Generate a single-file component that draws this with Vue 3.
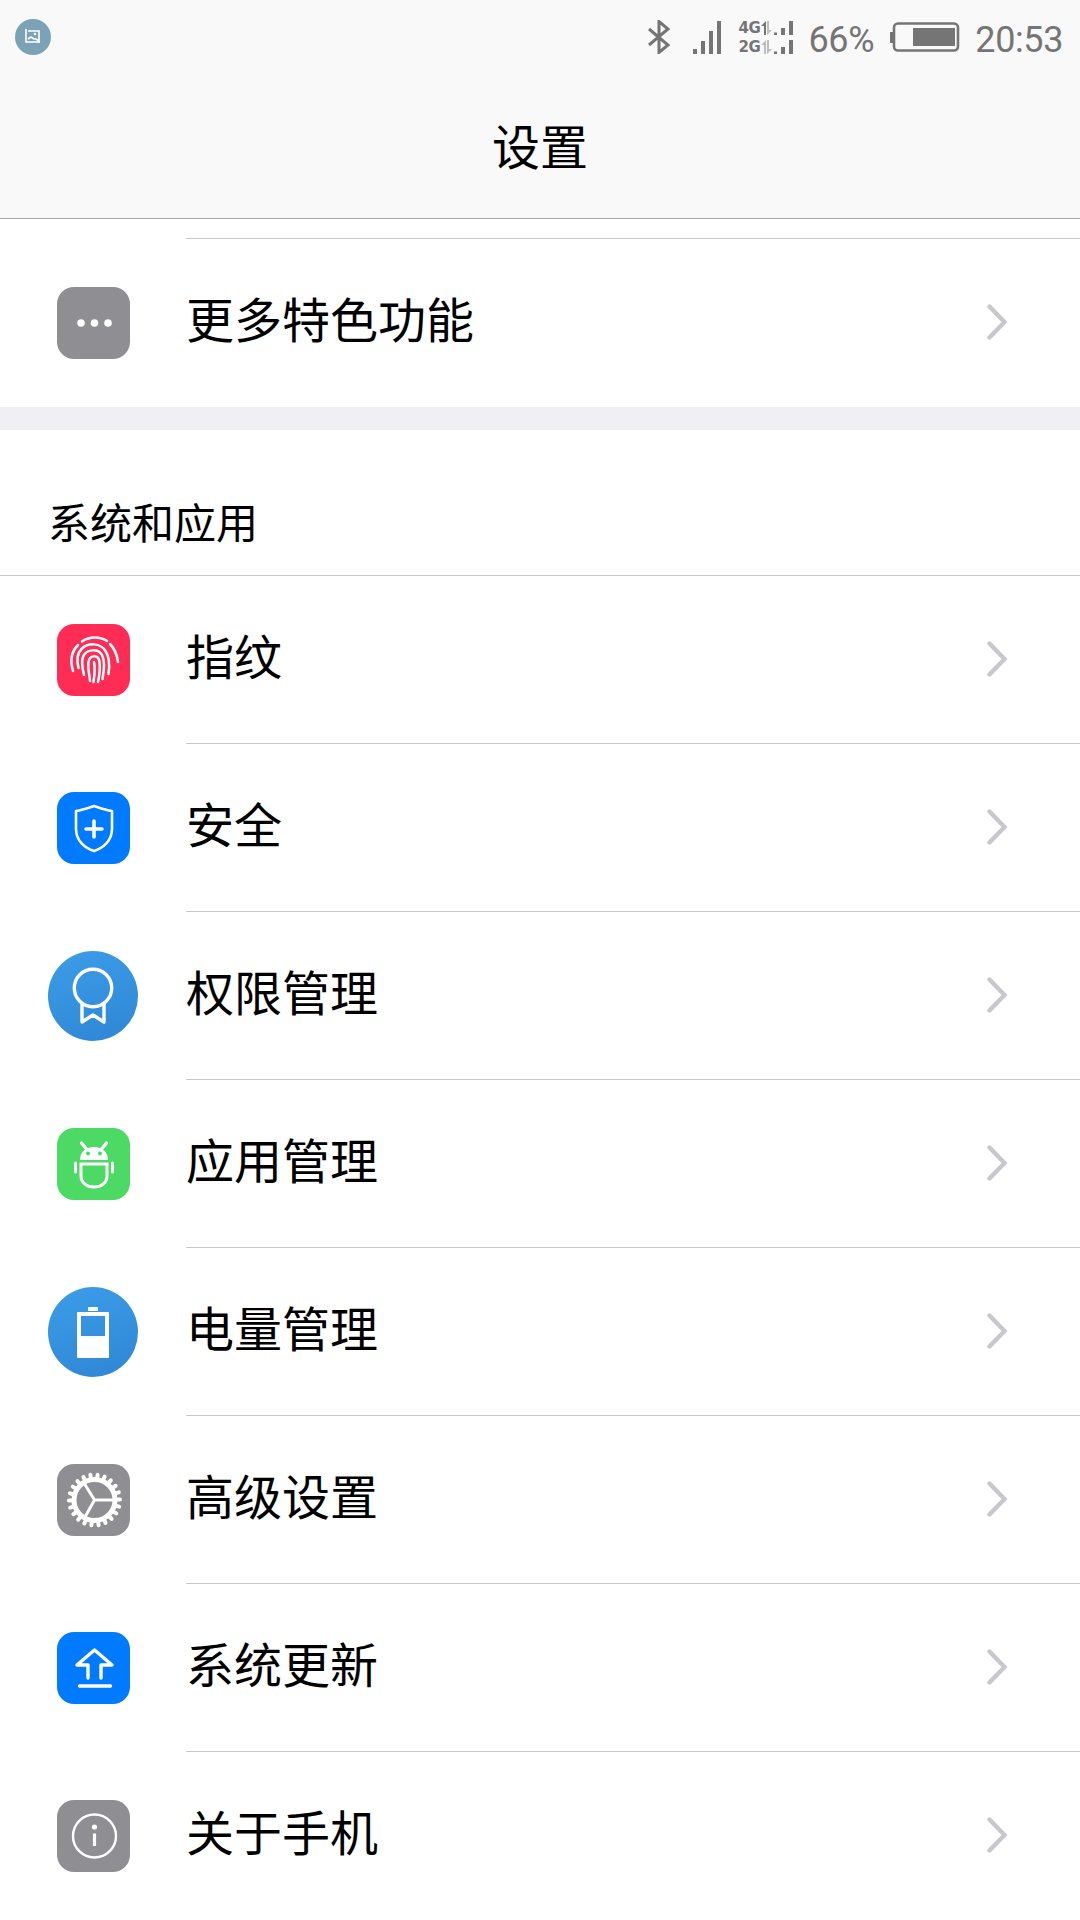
<script setup>
const rows = [
  { name: '指纹', icon: 'finger' },
  { name: '安全', icon: 'shield' },
  { name: '权限管理', icon: 'medal' },
  { name: '应用管理', icon: 'android' },
  { name: '电量管理', icon: 'battery' },
  { name: '高级设置', icon: 'gear' },
  { name: '系统更新', icon: 'update' },
  { name: '关于手机', icon: 'info' },
]
const teeth = Array.from({ length: 22 }, (_, i) => (i * 360) / 22)
</script>

<template>
  <div class="page">
    <header class="head">
      <div class="status">
        <div class="notif">
          <svg width="18" height="18" viewBox="0 0 18 18" fill="none" stroke="#fff" stroke-width="1.6">
            <path d="M2 1v13h14M4 3h11v12" />
            <path d="M4 11l3-2 3 2 2 0 3 2" />
            <circle cx="11" cy="6" r="1.3" fill="#fff" stroke="none" />
          </svg>
        </div>
        <div class="status-right">
          <svg class="bt" width="22" height="34" viewBox="0 0 22 34" fill="none" stroke="#757575" stroke-width="3">
            <path d="M1 9l19 16-9 7.500V1.500l9 7.500L1 25" />
          </svg>
          <svg class="sig" width="28" height="33" viewBox="0 0 28 33" fill="#757575">
            <rect x="0" y="28" width="4" height="5" />
            <rect x="8" y="20" width="4" height="13" />
            <rect x="16" y="10" width="4" height="23" />
            <rect x="24" y="0" width="4" height="33" />
          </svg>
          <div class="dual">
            <div class="sim">
              <span class="net">4G</span>
              <svg width="32" height="14" viewBox="0 0 32 14" fill="#757575">
                <path d="M0 5L5 0v14H3V5z" />
                <path d="M6 0h2v9h3l-5 5z" fill="#bdbdbd" />
                <rect x="13" y="11.500" width="3" height="2.500" />
                <rect x="20" y="7" width="4" height="7" />
                <rect x="28" y="0" width="4" height="14" />
              </svg>
            </div>
            <div class="sim">
              <span class="net">2G</span>
              <svg width="32" height="14" viewBox="0 0 32 14" fill="#757575">
                <path d="M0 5L5 0v14H3V5z" fill="#bdbdbd" />
                <path d="M6 0h2v9h3l-5 5z" fill="#bdbdbd" />
                <rect x="13" y="11.500" width="3" height="2.500" />
                <rect x="20" y="7" width="4" height="7" />
                <rect x="28" y="0" width="4" height="14" />
              </svg>
            </div>
          </div>
          <span class="pct">66%</span>
          <svg class="batt" width="70" height="30" viewBox="0 0 70 30">
            <rect x="0" y="10" width="3" height="11" fill="#757575" />
            <rect x="4" y="1.500" width="64" height="27" rx="4" fill="none" stroke="#757575" stroke-width="2.600" />
            <rect x="23" y="6" width="42" height="18" fill="#757575" />
          </svg>
          <span class="time">20:53</span>
        </div>
      </div>
      <div class="title">设置</div>
    </header>

    <div class="top-gap"></div>
    <div class="row tall">
      <div class="icon-box">
        <div class="icon square gray">
          <svg width="72" height="72" viewBox="0 0 72 72" fill="#fff">
            <circle cx="23" cy="36" r="3.800" /><circle cx="36.500" cy="36" r="3.800" /><circle cx="50" cy="36" r="3.800" />
          </svg>
        </div>
      </div>
      <div class="row-body">
        <span class="label">更多特色功能</span>
        <svg class="chev" width="20" height="36" viewBox="0 0 20 36" fill="none" stroke="#c7c7cc" stroke-width="4.400" stroke-linecap="round">
          <path d="M2.500 2.500L17.500 18 2.500 33.500" />
        </svg>
      </div>
    </div>

    <div class="band"></div>
    <div class="section">系统和应用</div>

    <div v-for="r in rows" :key="r.name" class="row">
      <div class="icon-box">
        <div v-if="r.icon === 'finger'" class="icon square red">
          <svg width="72" height="72" viewBox="0 0 72 72" fill="none" stroke="#fff" stroke-width="2.500" stroke-linecap="round">
            <path d="M15 47c-3-10-2-19 5-26" />
            <path d="M24 17.500c8-5.500 18-5 25-.5" />
            <path d="M52 20c4 4 7 10 8 18" />
            <path d="M20.500 44c-2-8-2-14 3-19 7-7 19-6 24 2 4 6 4.500 13 3 23" />
            <path d="M26 51c-2-8-3-13-1-18 3-8 15-9 19-2 3 6 2.500 14 .5 24" />
            <path d="M32 57c-.5-7-2.500-13-1.500-19 1-7 10-8 11 0 1 7 0 13-1.500 20" />
            <path d="M36 38c1.500 7 .5 13-.5 20" />
          </svg>
        </div>
        <div v-else-if="r.icon === 'shield'" class="icon square blue">
          <svg width="72" height="72" viewBox="0 0 72 72" fill="none" stroke="#fff" stroke-linecap="round" stroke-linejoin="round">
            <path stroke-width="2.600" d="M18 19c7-1 12-3 18-5 6 2 11 4 18 5v18c0 12-9 19-18 22-9-3-18-10-18-22z" />
            <path stroke-width="3.600" d="M28 37h16M36 29v16" />
          </svg>
        </div>
        <div v-else-if="r.icon === 'medal'" class="icon round">
          <svg width="90" height="90" viewBox="0 0 90 90" fill="none" stroke="#fff" stroke-width="3.400" stroke-linecap="round" stroke-linejoin="round">
            <circle cx="45" cy="37" r="18.700" />
            <path d="M34 53v18l11-7 11 7V53" />
          </svg>
        </div>
        <div v-else-if="r.icon === 'android'" class="icon square green">
          <svg width="72" height="72" viewBox="0 0 72 72" fill="none" stroke="#fff" stroke-linecap="round">
            <path fill="#fff" stroke="none" d="M22 32c0-8 6-13 14-13s14 5 14 13z" />
            <path stroke-width="3.200" d="M23.500 15l5 6M48.500 15l-5 6" />
            <circle cx="30" cy="25.500" r="2" fill="#4cd964" stroke="none" />
            <circle cx="42" cy="25.500" r="2" fill="#4cd964" stroke="none" />
            <path stroke-width="3" d="M23 36h26v12c0 7-6 11-13 11s-13-4-13-11z" />
            <path stroke-width="3" d="M17.500 35v9M54.500 35v9" />
          </svg>
        </div>
        <div v-else-if="r.icon === 'battery'" class="icon round">
          <svg width="90" height="90" viewBox="0 0 90 90" fill="#fff">
            <rect x="40" y="20" width="10" height="4" rx="0.500" />
            <path fill-rule="evenodd" d="M30 25h30a1 1 0 0 1 1 1v44a1 1 0 0 1-1 1H30a1 1 0 0 1-1-1V26a1 1 0 0 1 1-1zM33 29v20h24V29z" />
          </svg>
        </div>
        <div v-else-if="r.icon === 'gear'" class="icon square gray">
          <svg width="72" height="72" viewBox="0 0 72 72" fill="none" stroke="#fff">
            <g stroke-width="4" stroke-linecap="round">
              <line v-for="t in teeth" :key="t" x1="36.500" y1="14" x2="36.500" y2="10.500" :transform="`rotate(${t + 7} 36.500 36)`" />
            </g>
            <circle cx="36.500" cy="36" r="20.500" stroke-width="5" />
            <path stroke-width="3" d="M36.500 36L26 19M36.500 36h20M36.500 36L27 53" />
          </svg>
        </div>
        <div v-else-if="r.icon === 'update'" class="icon square blue">
          <svg width="72" height="72" viewBox="0 0 72 72" fill="none" stroke="#fff" stroke-width="3.400" stroke-linecap="round" stroke-linejoin="round">
            <path d="M30 46V33H19L36.500 18 54 33H43v13" />
            <path d="M21.500 54h31" />
          </svg>
        </div>
        <div v-else class="icon square gray">
          <svg width="72" height="72" viewBox="0 0 72 72" fill="none" stroke="#fff">
            <circle cx="36.500" cy="36" r="21.500" stroke-width="2.400" />
            <circle cx="36.500" cy="27" r="2.600" fill="#fff" stroke="none" />
            <path stroke-width="3.200" d="M36.500 33.500V46" />
          </svg>
        </div>
      </div>
      <div class="row-body">
        <span class="label">{{ r.name }}</span>
        <svg class="chev" width="20" height="36" viewBox="0 0 20 36" fill="none" stroke="#c7c7cc" stroke-width="4.400" stroke-linecap="round">
          <path d="M2.500 2.500L17.500 18 2.500 33.500" />
        </svg>
      </div>
    </div>
  </div>
</template>

<style>
html, body { margin: 0; background: #fff; overflow: hidden; }
</style>

<style scoped>
.page {
  width: 1080px;
  height: 1920px;
  overflow: hidden;
  background: #fff;
  font-family: "Noto Sans CJK SC", "Roboto", sans-serif;
  color: #000;
}
.head {
  height: 218px;
  background: #f9f9f9;
  border-bottom: 1px solid #a8a8a8;
}
.status {
  height: 74px;
  display: flex;
  align-items: center;
  justify-content: space-between;
  padding: 0 17px 0 15px;
}
.notif {
  width: 36px;
  height: 36px;
  border-radius: 50%;
  background: #7ba3b5;
  display: flex;
  align-items: center;
  justify-content: center;
}
.status-right {
  display: flex;
  align-items: center;
  color: #757575;
  font-family: Roboto, sans-serif;
  font-size: 36px;
}
.bt { margin-right: 23px; }
.sig { margin-right: 17px; }
.dual { display: flex; flex-direction: column; gap: 5px; width: 55px; margin-right: 15px; }
.sim { display: flex; align-items: center; justify-content: space-between; height: 14px; }
.net {
  font-family: "DejaVu Sans", sans-serif;
  font-size: 15px;
  font-weight: 700;
  line-height: 14px;
  letter-spacing: -0.3px;
}
.pct { margin-right: 16px; padding-top: 5px; letter-spacing: -0.3px; }
.batt { margin-right: 15px; }
.time { padding-top: 5px; letter-spacing: -0.4px; }
.title {
  height: 144px;
  box-sizing: border-box;
  padding-bottom: 5px;
  display: flex;
  align-items: center;
  justify-content: center;
  font-size: 48px;
}
.top-gap { height: 19px; }
.row {
  height: 168px;
  display: flex;
}
.tall { height: 169px; }
.icon-box {
  width: 186px;
  flex: none;
  box-sizing: border-box;
  padding-top: 2px;
  display: flex;
  align-items: center;
  justify-content: center;
}
.tall .icon-box { padding-top: 1px; }
.icon {
  display: flex;
  align-items: center;
  justify-content: center;
  flex: none;
}
.square { width: 73px; height: 72px; border-radius: 17px; margin-left: 1px; }
.round {
  width: 90px;
  height: 90px;
  border-radius: 50%;
  background: linear-gradient(160deg, #3b9de8, #2f86d4);
}
.gray { background: #8e8e93; }
.red { background: #ff2d55; }
.blue { background: #007aff; }
.green { background: #4cd964; }
.row-body {
  flex: 1;
  display: flex;
  align-items: center;
  justify-content: space-between;
  padding-right: 73px;
  border-top: 1px solid #c8c8c8;
}
.label { font-size: 48px; line-height: 1; padding-bottom: 12px; }
.chev { margin-bottom: 2px; }
.band { height: 23px; background: #efeff4; }
.section {
  height: 146px;
  box-sizing: border-box;
  padding: 66px 0 0 48px;
  font-size: 42px;
  line-height: 50px;
  border-bottom: 1px solid #c8c8c8;
}
.section + .row { height: 167px; }
.section + .row .icon-box { padding-top: 0; }
.section + .row .row-body { border-top: none; }
</style>
